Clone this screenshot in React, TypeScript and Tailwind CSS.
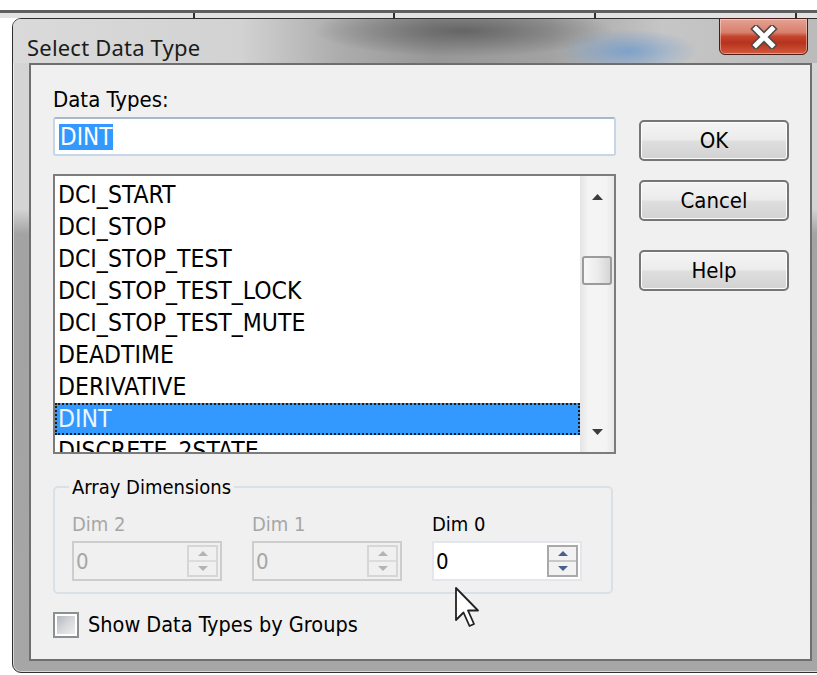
import React from "react";

const sys = "font-['DejaVu_Sans_Condensed','DejaVu_Sans',sans-serif]";

const items = [
  "DCI_START",
  "DCI_STOP",
  "DCI_STOP_TEST",
  "DCI_STOP_TEST_LOCK",
  "DCI_STOP_TEST_MUTE",
  "DEADTIME",
  "DERIVATIVE",
  "DINT",
  "DISCRETE_2STATE",
];

function Tri({ dir, fill, w = 11, h = 6 }: { dir: "up" | "down"; fill: string; w?: number; h?: number }) {
  const pts = dir === "up" ? `0,${h} ${w / 2},0 ${w},${h}` : `0,0 ${w},0 ${w / 2},${h}`;
  return (
    <svg width={w} height={h} viewBox={`0 0 ${w} ${h}`} className="block">
      <polygon points={pts} fill={fill} />
    </svg>
  );
}

function WinButton({ label }: { label: string }) {
  return (
    <button
      className={`${sys} h-[41px] w-full rounded-[5px] border-2 border-[#767676] bg-[linear-gradient(180deg,#f4f4f4_0%,#ececec_47%,#dedede_53%,#d2d2d2_100%)] text-[22px] leading-none text-black shadow-[inset_0_0_0_1px_#fcfcfc]`}
    >
      {label}
    </button>
  );
}

function Spin({ label, enabled }: { label: string; enabled: boolean }) {
  return (
    <div className="flex w-[150px] flex-col">
      <span className={`${sys} text-[20px] leading-[24px] ${enabled ? "text-black" : "text-[#a6a6a6]"}`}>{label}</span>
      <div
        className={`mt-[5px] flex h-[40px] items-stretch border-2 ${
          enabled ? "border-[#e3e7eb] bg-white" : "border-[#cdcdcd] bg-[#f0f0f0]"
        }`}
      >
        <span className={`${sys} flex flex-1 items-center pl-[2px] text-[22px] ${enabled ? "text-black" : "text-[#a6a6a6]"}`}>0</span>
        <div
          className={`my-[2px] mr-[2px] flex w-[31px] flex-col border-2 ${
            enabled ? "border-[#a9a9a9] bg-[#f2f2f2]" : "border-[#d6d6d6] bg-[#f0f0f0]"
          }`}
        >
          <div className={`flex flex-1 items-center justify-center border-b-2 ${enabled ? "border-[#c8c8c8]" : "border-[#dcdcdc]"}`}>
            <Tri dir="up" fill={enabled ? "#4a5f8c" : "#b4b4b4"} w={10} h={5} />
          </div>
          <div className="flex flex-1 items-center justify-center">
            <Tri dir="down" fill={enabled ? "#4a5f8c" : "#b4b4b4"} w={10} h={5} />
          </div>
        </div>
      </div>
    </div>
  );
}

export default function App() {
  return (
    <div className="relative h-[675px] w-[817px] overflow-hidden bg-white">
      {/* strip of the window behind the dialog */}
      <div className="flex h-[18px] flex-col">
        <div className="h-[10px] bg-white" />
        <div className="h-[3px] bg-[#5e5e5e]" />
        <div className="flex h-[5px] bg-[#e2e2e2]">
          <div className="w-[193px]" />
          <div className="w-[2px] bg-[#303030]" />
          <div className="w-[198px]" />
          <div className="w-[2px] bg-[#303030]" />
          <div className="w-[199px]" />
          <div className="w-[2px] bg-[#303030]" />
          <div className="w-[199px]" />
          <div className="w-[2px] bg-[#303030]" />
        </div>
      </div>

      {/* dialog window */}
      <div className="ml-[12px] flex h-[655px] w-[815px] flex-col rounded-tl-[9px] rounded-bl-[9px] border border-[#2f2f2f] bg-[linear-gradient(180deg,#d4d4d4_0px,#d4d4d4_190px,#a3a3a3_215px,#a6a6a6_100%)] pr-[14px] pb-[11px] pl-[16px] shadow-[inset_0_0_0_1px_rgba(255,255,255,0.55)]">
        {/* title bar */}
        <div className="-mr-[14px] -ml-[16px] flex h-[44px] items-start justify-between rounded-tl-[8px] bg-[radial-gradient(ellipse_70px_22px_at_615px_32px,rgba(110,155,205,0.8),transparent),radial-gradient(ellipse_150px_26px_at_450px_12px,rgba(95,95,95,0.9),transparent),linear-gradient(90deg,#dadada_0%,#d2d2d2_28%,#adadad_40%,#979797_52%,#a2a2a2_66%,#c6c6c6_80%,#bababa_100%)]">
          <span className="mt-[14px] ml-[14px] font-['Noto_Sans',sans-serif] text-[22px] leading-[28px] tracking-[0.2px] text-[#1b1b1b]">
            Select Data Type
          </span>
          <div className="-mt-px mr-[18px] flex h-[37px] w-[89px] items-center justify-center rounded-b-[6px] border border-[#4a1e17] bg-[linear-gradient(180deg,#e4a295_0%,#d9806d_38%,#c4452d_50%,#b6321d_68%,#d35a3d_100%)] shadow-[inset_0_0_0_1px_rgba(255,235,225,0.45)]">
            <svg width="30" height="24" viewBox="0 0 30 24">
              <path d="M7 4 L23 20 M23 4 L7 20" stroke="#4a4a4a" strokeWidth="8" strokeLinecap="square" />
              <path d="M7 4 L23 20 M23 4 L7 20" stroke="#ffffff" strokeWidth="5" strokeLinecap="square" />
            </svg>
          </div>
        </div>

        {/* client area */}
        <div className="flex flex-1 border-2 border-[#6f6f6f] bg-[#f0f0f0] pl-[22px]">
          {/* left column */}
          <div className="flex w-[563px] flex-col">
            <span className={`${sys} mt-[22px] text-[22px] leading-[25px] text-black`}>Data Types:</span>

            <div className="mt-[5px] flex h-[39px] items-center rounded-[3px] border-2 border-[#c6d6e6] border-t-[#a7b8ca] bg-white pl-[4px]">
              <span className={`${sys} bg-[#3399ff] px-[1px] text-[24px] leading-[26px] text-white`}>DINT</span>
            </div>

            {/* list box */}
            <div className="mt-[18px] flex h-[280px] border-2 border-[#7c7c7c] bg-white">
              <div className="flex flex-1 flex-col overflow-hidden pt-[3px]">
                {items.map((it) =>
                  it === "DINT" ? (
                    <div
                      key={it}
                      className={`${sys} flex h-[32px] shrink-0 items-center border-2 border-dotted border-[#1c1c1c] bg-[#3399ff] pl-[1px] text-[24.5px] text-[#eef5ff]`}
                    >
                      {it}
                    </div>
                  ) : (
                    <div key={it} className={`${sys} flex h-[32px] shrink-0 items-center pl-[3px] text-[24.5px] text-black`}>
                      {it}
                    </div>
                  )
                )}
              </div>
              {/* vertical scrollbar */}
              <div className="flex w-[34px] flex-col bg-[linear-gradient(90deg,#e4e4e4_0%,#f4f4f4_25%,#f4f4f4_75%,#e8e8e8_100%)]">
                <div className="flex h-[42px] items-center justify-center">
                  <Tri dir="up" fill="#3c3c3c" />
                </div>
                <div className="h-[38px]" />
                <div className="mx-[2px] h-[29px] rounded-[3px] border-2 border-[#9b9b9b] bg-[linear-gradient(90deg,#f8f8f8_0%,#ececec_50%,#d6d6d6_100%)]" />
                <div className="flex-1" />
                <div className="flex h-[40px] items-center justify-center">
                  <Tri dir="down" fill="#3c3c3c" />
                </div>
              </div>
            </div>

            {/* array dimensions group */}
            <fieldset className="mt-[21px] w-[560px] rounded-[5px] border-2 border-[#d9e0e6] pr-[10px] pb-[11px] pl-[17px]">
              <legend className={`${sys} -ml-[3px] px-[3px] text-[20px] leading-[24px] text-black`}>Array Dimensions</legend>
              <div className="mt-[13px] flex gap-[30px]">
                <Spin label="Dim 2" enabled={false} />
                <Spin label="Dim 1" enabled={false} />
                <Spin label="Dim 0" enabled={true} />
              </div>
            </fieldset>

            {/* checkbox */}
            <div className="mt-[18px] flex items-center gap-[9px]">
              <div className="h-[26px] w-[26px] border-2 border-[#8e8f8f] bg-white p-[2px]">
                <div className="h-full w-full bg-[linear-gradient(135deg,#b4b8bd_0%,#d9dadc_55%,#eeeeee_100%)]" />
              </div>
              <span className={`${sys} text-[21.5px] leading-[26px] text-black`}>Show Data Types by Groups</span>
            </div>
          </div>

          {/* right column */}
          <div className="ml-[23px] mt-[55px] flex w-[150px] flex-col">
            <WinButton label="OK" />
            <div className="h-[19px]" />
            <WinButton label="Cancel" />
            <div className="h-[29px]" />
            <WinButton label="Help" />
          </div>
        </div>
      </div>

      {/* mouse pointer */}
      <svg className="pointer-events-none absolute top-[587px] left-[455px]" width="26" height="41" viewBox="0 0 26 41">
        <path
          d="M1 1 L1 33 L8.5 25.5 L14.5 39 L19 37 L13 23.5 L23 23.5 Z"
          fill="#ffffff"
          stroke="#222222"
          strokeWidth="1.8"
          strokeLinejoin="round"
        />
      </svg>
    </div>
  );
}
